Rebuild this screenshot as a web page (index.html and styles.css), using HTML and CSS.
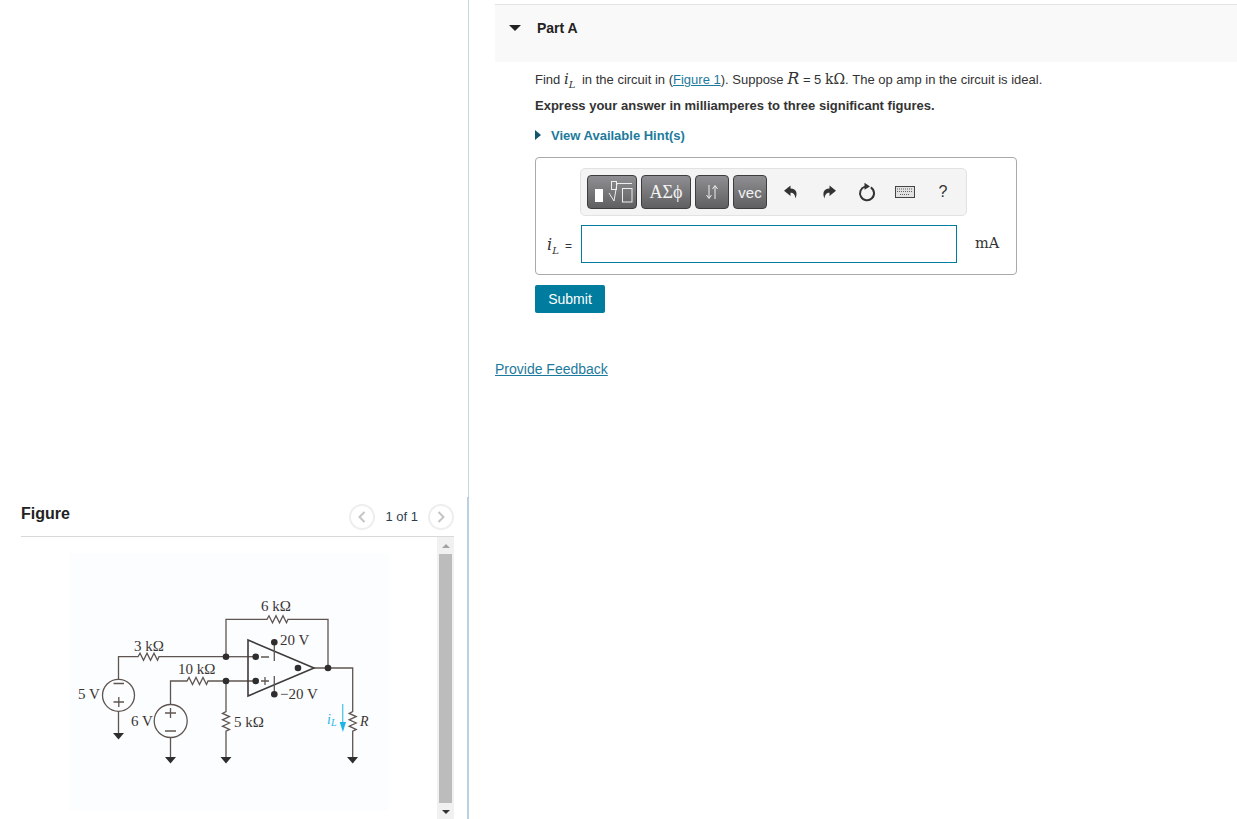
FILE: index.html
```html
<!DOCTYPE html>
<html>

<head>
  <title>Part A</title>
  <meta charset="utf-8">
  <link rel="stylesheet" href="styles.css">
</head>

<body>

<div class="figure-pane">
  <div class="figure">
    <div class="figure__head">
      <h2 class="figure__title">Figure</h2>
      <div class="pager">
        <span class="pager__btn">
          <svg width="12" height="14" viewBox="0 0 12 14"><path d="M8.5 2 L3.5 7 L8.5 12" /></svg>
        </span>
        <span class="pager__text">1 of 1</span>
        <span class="pager__btn">
          <svg width="12" height="14" viewBox="0 0 12 14"><path d="M3.5 2 L8.5 7 L3.5 12" /></svg>
        </span>
      </div>
    </div>
    <div class="figure__body">
      <div class="figure__image">
        <svg class="circuit" width="320" height="257" viewBox="69 553 320 257">
          <g class="wire">
            <path d="M118.5 679 V656.7 H138 l2 -3.5 l3.5 7 l3.5 -7 l3.5 7 l3.5 -7 l3.5 7 l1.5 -3.5 H226" />
            <path d="M118.5 711.5 V733" />
            <path d="M170.5 704.5 V681 H187 l2 -3.5 l3.5 7 l3.5 -7 l3.5 7 l3.5 -7 l3.5 7 l1.5 -3.5 H256" />
            <path d="M170.5 737.5 V757" />
            <path d="M226 656.7 V619.3 H267 l2 -3.5 l3.5 7 l3.5 -7 l3.5 7 l3.5 -7 l3.5 7 l1.5 -3.5 H328 V668" />
            <path d="M226 656.7 H256" />
            <path d="M226 681 V711.7 l-3.5 1.7 l7 3.2 l-7 3.2 l7 3.2 l-7 3.2 l7 3.2 l-3.5 1.7 V757" />
            <path class="wire__amp" d="M248 640 L314 668 L248 696 Z" />
            <path d="M274.3 642 V661 M274.3 676 V694" />
            <path d="M314 668 H352.7 V711.7 l-3.5 1.7 l7 3.2 l-7 3.2 l7 3.2 l-7 3.2 l7 3.2 l-3.5 1.7 V757" />
            <circle cx="118.5" cy="695.3" r="16" />
            <circle cx="170.7" cy="721" r="16.5" />
            <path d="M113.5 683.5 H124 M113.5 702 H124 M118.8 697 V707" />
            <path d="M165 713 H176 M170.5 708 V718 M165 731 H176" />
            <path d="M261 657 H269 M261 681 H269 M265 677 V685" />
          </g>
          <g class="dot">
            <circle cx="226" cy="656.7" r="3.3" />
            <circle cx="226" cy="681" r="3.3" />
            <circle cx="255.7" cy="656.7" r="3.3" />
            <circle cx="255.7" cy="681" r="3.3" />
            <circle cx="274.3" cy="642.3" r="3.3" />
            <circle cx="274.3" cy="694.3" r="3.3" />
            <circle cx="298" cy="668" r="3.3" />
            <circle cx="328" cy="668" r="3.3" />
            <path d="M113 733 H124 L118.5 739.5 Z" />
            <path d="M165 757 H176 L170.5 763.5 Z" />
            <path d="M220.5 757 H231.5 L226 763.5 Z" />
            <path d="M347 757 H358 L352.7 763.5 Z" />
          </g>
          <path class="current" d="M342.7 704 V722" />
          <path class="current-head" d="M339.7 722 H346 L342.9 732 Z" />
          <g class="label">
            <text x="134" y="651">3 kΩ</text>
            <text x="178" y="674">10 kΩ</text>
            <text x="78" y="699">5 V</text>
            <text x="131" y="726">6 V</text>
            <text x="261" y="611">6 kΩ</text>
            <text x="280" y="645">20 V</text>
            <text x="280" y="699">−20 V</text>
            <text x="234" y="727">5 kΩ</text>
            <text class="label--italic" x="360" y="726">R</text>
            <text class="label--current" x="327" y="724">i<tspan class="label__sub" dy="2">L</tspan></text>
          </g>
        </svg>
      </div>
      <div class="scrollbar">
        <span class="scrollbar__up"></span>
        <span class="scrollbar__thumb"></span>
        <span class="scrollbar__down"></span>
      </div>
    </div>
  </div>
</div>

<div class="main-pane">
  <div class="part-head">
    <span class="part-head__arrow"></span>
    <h3 class="part-head__title">Part A</h3>
  </div>

  <div class="part-body">
    <p class="question">Find <span class="math"><i>i</i><sub>L</sub></span> in the circuit in (<a href="#">Figure 1</a>). Suppose <span class="math math--big"><i>R</i></span> = 5 <span class="math math--big">kΩ</span>. The op amp in the circuit is ideal.</p>
    <p class="instruction">Express your answer in milliamperes to three significant figures.</p>
    <p class="hint"><span class="hint__arrow"></span>View Available Hint(s)</p>

    <div class="answer">
      <div class="toolbar">
        <button class="tool tool--wide">
          <svg width="46" height="32" viewBox="0 0 46 32">
            <rect class="tool__fill" x="6" y="13" width="8" height="13" />
            <rect class="tool__line" x="22.5" y="5.5" width="5" height="8" />
            <path class="tool__line" d="M20 17 L25 25 L28 7.5 H43" />
            <rect class="tool__line" x="33.5" y="12.5" width="9.5" height="13.5" />
          </svg>
        </button>
        <button class="tool tool--wide tool--text">ΑΣϕ</button>
        <button class="tool tool--narrow">
          <svg width="20" height="20" viewBox="0 0 20 20">
            <path class="tool__line" d="M7 3 V16 M4.5 13 L7 16.5 L9.5 13 M13 17 V4 M10.5 7 L13 3.5 L15.5 7" />
          </svg>
        </button>
        <button class="tool tool--narrow tool--vec">vec</button>
        <div class="actions">
          <span class="action">
            <svg width="16" height="16" viewBox="0 0 16 16"><path class="action__solid" d="M7.5 1.5 L1 6.8 L7.5 12 V8.8 C10.5 8.8 12 10.5 12.5 14.5 C14.5 10 14 4.8 7.5 4.6 Z" /></svg>
          </span>
          <span class="action">
            <svg width="16" height="16" viewBox="0 0 16 16"><path class="action__solid" d="M8.5 1.5 L15 6.8 L8.5 12 V8.8 C5.5 8.8 4 10.5 3.5 14.5 C1.5 10 2 4.8 8.5 4.6 Z" /></svg>
          </span>
          <span class="action">
            <svg width="18" height="20" viewBox="0 0 18 20"><path class="action__ring" d="M12.8 5.4 A7 7 0 1 1 7 4.6" /><path class="action__solid" d="M6.5 0.8 L12 4.4 L6.5 7.8 Z" /></svg>
          </span>
          <span class="action">
            <svg width="20" height="12" viewBox="0 0 20 12">
              <rect class="key__frame" x="0.5" y="0.5" width="19" height="11" />
              <path class="key__rows" d="M2 3 H18 M2 5.5 H18 M5 8.5 H15" />
            </svg>
          </span>
          <span class="action action--help">?</span>
        </div>
      </div>

      <div class="answer__row">
        <span class="answer__label"><span class="math math--answer"><i>i</i><sub>L</sub></span> =</span>
        <input class="answer__input" type="text">
        <span class="answer__unit">mA</span>
      </div>
    </div>

    <button class="submit">Submit</button>
  </div>

  <a class="feedback" href="#">Provide Feedback</a>
</div>

</body>

</html>
```

FILE: styles.css
```css
* {
  box-sizing: border-box;
}

html, body {
  margin: 0;
  height: 819px;
  overflow: hidden;
}

body {
  display: flex;
  background: #fff;
  color: #333;
  font-family: "Liberation Sans", Arial, sans-serif;
  font-size: 13px;
}

/* left column */
.figure-pane {
  width: 469px;
  height: 819px;
  flex: none;
  display: flex;
  flex-direction: column;
  justify-content: flex-end;
  border-right: 1px solid #c6d6e2;
}

.figure {
  height: 322px;
  padding: 0 0 0 21px;
  margin-right: -1px;
  border-right: 2px solid #b9cfe2;
  display: flex;
  flex-direction: column;
}

.figure__head {
  height: 40px;
  margin-right: 13px;
  border-bottom: 1px solid #d9d9d9;
  display: flex;
  align-items: center;
  justify-content: space-between;
}

.figure__title {
  margin: 0 0 6px;
  font-size: 16px;
  font-weight: bold;
  color: #222;
}

.pager {
  display: flex;
  align-items: center;
  gap: 10px;
}

.pager__btn {
  width: 26px;
  height: 26px;
  border: 2px solid #eee;
  border-radius: 50%;
  display: flex;
  align-items: center;
  justify-content: center;
}

.pager__btn path {
  fill: none;
  stroke: #c4c4c4;
  stroke-width: 2;
}

.pager__text {
  font-size: 13px;
  color: #2c3e50;
}

.figure__body {
  flex: 1;
  display: flex;
  justify-content: space-between;
  padding-right: 13px;
  min-height: 0;
}

.figure__image {
  padding: 16px 0 0 48px;
}

.circuit {
  display: block;
  background: #fcfdfe;
}

.wire path, .wire circle {
  fill: none;
  stroke: #5f5552;
  stroke-width: 1.3;
}

.wire .wire__amp {
  stroke: #403b3b;
  stroke-width: 1.6;
}

.dot {
  fill: #2f2d2e;
}

.current {
  stroke: #5cc8ee;
  stroke-width: 1.4;
  fill: none;
}

.current-head {
  fill: #1cb5ea;
}

.label text {
  font-family: "Liberation Serif", serif;
  font-size: 15px;
  fill: #3a3535;
}

.label .label--italic {
  font-style: italic;
  font-size: 14px;
}

.label .label--current {
  font-style: italic;
  font-size: 14px;
  fill: #1cb5ea;
}

.label__sub {
  font-size: 10px;
}

.scrollbar {
  width: 17px;
  background: #f1f1f1;
  display: flex;
  flex-direction: column;
  align-items: center;
}

.scrollbar__up {
  margin-top: 7px;
  border: 4px solid transparent;
  border-top: 0;
  border-bottom: 4px solid #a3a3a3;
}

.scrollbar__thumb {
  margin-top: 6px;
  width: 13px;
  height: 249px;
  background: #bcbcbc;
}

.scrollbar__down {
  margin-top: 7px;
  border: 4px solid transparent;
  border-bottom: 0;
  border-top: 4px solid #333;
}

/* right column */
.main-pane {
  flex: 1;
  padding: 4px 0 0 26px;
}

.part-head {
  height: 58px;
  padding: 15px 0 0 14px;
  background: #f9f9f9;
  border-top: 1px solid #e3e3e3;
  display: flex;
  gap: 16px;
}

.part-head__arrow {
  margin-top: 5px;
  width: 0;
  height: 0;
  border: 6px solid transparent;
  border-bottom: 0;
  border-top: 6px solid #222;
}

.part-head__title {
  margin: 0;
  font-size: 14px;
  font-weight: bold;
  color: #222;
}

.part-body {
  padding: 8px 0 0 40px;
}

.question {
  margin: 0;
  height: 27px;
  line-height: 17px;
}

.question a, .feedback {
  color: #1d7a9c;
}

.math {
  font-family: "DejaVu Serif", serif;
  font-size: 15px;
}

.math--big {
  font-size: 14px;
}

.math--big i {
  font-size: 16px;
}

.math--answer {
  font-size: 16px;
}

.math sub {
  font-size: 10px;
  font-style: italic;
  line-height: 0;
  margin-right: 3px;
}

.instruction {
  margin: 0;
  height: 27px;
  font-size: 13px;
  font-weight: bold;
  line-height: 17px;
}

.hint {
  margin: 0;
  height: 22px;
  font-size: 13px;
  font-weight: bold;
  color: #1d7a9c;
  line-height: 17px;
  display: flex;
  align-items: center;
}

.hint__arrow {
  width: 0;
  height: 0;
  margin-right: 10px;
  border: 5px solid transparent;
  border-right: 0;
  border-left: 6px solid #14546e;
}

.answer {
  width: 482px;
  height: 118px;
  margin-top: 11px;
  padding: 10px 0 0 44px;
  border: 1px solid #aaa;
  border-radius: 4px;
}

.toolbar {
  width: 387px;
  height: 48px;
  padding: 6px;
  background: #f4f4f4;
  border: 1px solid #e2e2e2;
  border-radius: 5px;
  display: flex;
  gap: 4px;
}

.tool {
  height: 34px;
  flex: none;
  padding: 0;
  background: linear-gradient(#8f8f93, #5f5f61);
  border: 1px solid #3d3d3d;
  border-radius: 4px;
  color: #f3f3f3;
  display: flex;
  align-items: center;
  justify-content: center;
}

.tool--wide {
  width: 50px;
}

.tool--narrow {
  width: 34px;
}

.tool--text {
  font-family: "Liberation Serif", serif;
  font-size: 18px;
}

.tool--vec {
  font-family: "Liberation Sans", Arial, sans-serif;
  font-size: 15px;
}

.tool__fill {
  fill: #fff;
}

.tool__line {
  fill: none;
  stroke: #eee;
  stroke-width: 1;
}

.actions {
  margin-left: 1px;
  flex: none;
  display: flex;
  align-items: center;
}

.action {
  width: 38px;
  display: flex;
  justify-content: center;
}

.action__solid {
  fill: #333;
}

.action__ring {
  fill: none;
  stroke: #333;
  stroke-width: 2;
}

.key__frame {
  fill: #e2e2e2;
  stroke: #444;
}

.key__rows {
  fill: none;
  stroke: #666;
  stroke-dasharray: 1 1;
}

.action--help {
  font-size: 16px;
}

.answer__row {
  margin-top: 9px;
  margin-left: -44px;
  padding-left: 11px;
  display: flex;
  align-items: center;
}

.answer__label {
  width: 34px;
  flex: none;
  font-size: 12px;
  white-space: nowrap;
}

.answer__input {
  width: 376px;
  height: 38px;
  flex: none;
  border: 1px solid #007c9e;
  background: #fff;
  border-radius: 0;
  outline: none;
}

.answer__unit {
  margin: 0 0 2px 18px;
  font-family: "DejaVu Serif", serif;
  font-size: 14.5px;
}

.submit {
  display: block;
  width: 70px;
  height: 28px;
  margin-top: 10px;
  padding: 0;
  background: #007c9e;
  border: 0;
  border-radius: 2px;
  color: #fff;
  font-family: "Liberation Sans", Arial, sans-serif;
  font-size: 14px;
}

.feedback {
  display: block;
  margin-top: 48px;
  font-size: 14px;
  line-height: 16px;
}
```
